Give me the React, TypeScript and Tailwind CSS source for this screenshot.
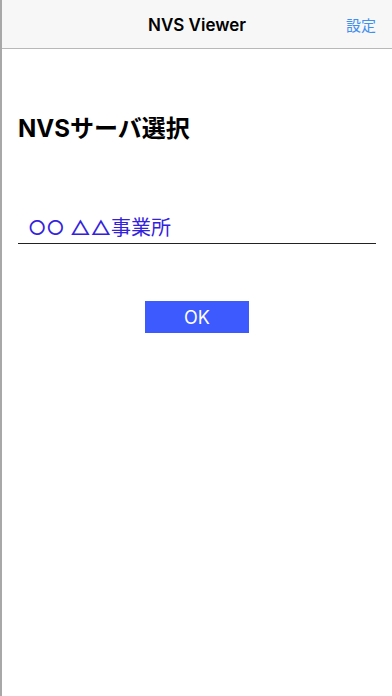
import { useState } from "react";

const FONT = {
  fontFamily:
    '"Helvetica Neue", Inter, "Noto Sans CJK JP", "Noto Sans", sans-serif',
};

export default function App() {
  const [server, setServer] = useState("○○ △△事業所");

  return (
    <div
      className="flex h-[696px] w-[392px] flex-col border-l-2 border-[#a8a8a8] bg-white"
      style={FONT}
    >
      <header className="relative flex h-[49px] shrink-0 items-center justify-center border-b border-[#b8b8b8] bg-[#f7f7f7] pt-[3px]">
        <h1 className="text-[17px] font-semibold text-black">NVS Viewer</h1>
        <button className="absolute right-[16px] top-[17px] text-[15px] leading-[18px] text-[#3f8ef0]">
          設定
        </button>
      </header>

      <main className="flex flex-col px-[16px]">
        <h2 className="mt-[66px] text-[24px] font-bold leading-[28px] text-black">
          NVSサーバ選択
        </h2>

        <div className="mt-[70px] border-b-[1.5px] border-[#222]">
          <input
            value={server}
            onChange={(e) => setServer(e.target.value)}
            className="h-[30px] w-full bg-transparent pl-[10px] text-[20px] text-[#3322dd] outline-none"
          />
        </div>

        <div className="mt-[57px] flex justify-center">
          <button className="h-[32px] w-[104px] bg-[#3d5afe] text-[18px] text-white">
            OK
          </button>
        </div>
      </main>
    </div>
  );
}
